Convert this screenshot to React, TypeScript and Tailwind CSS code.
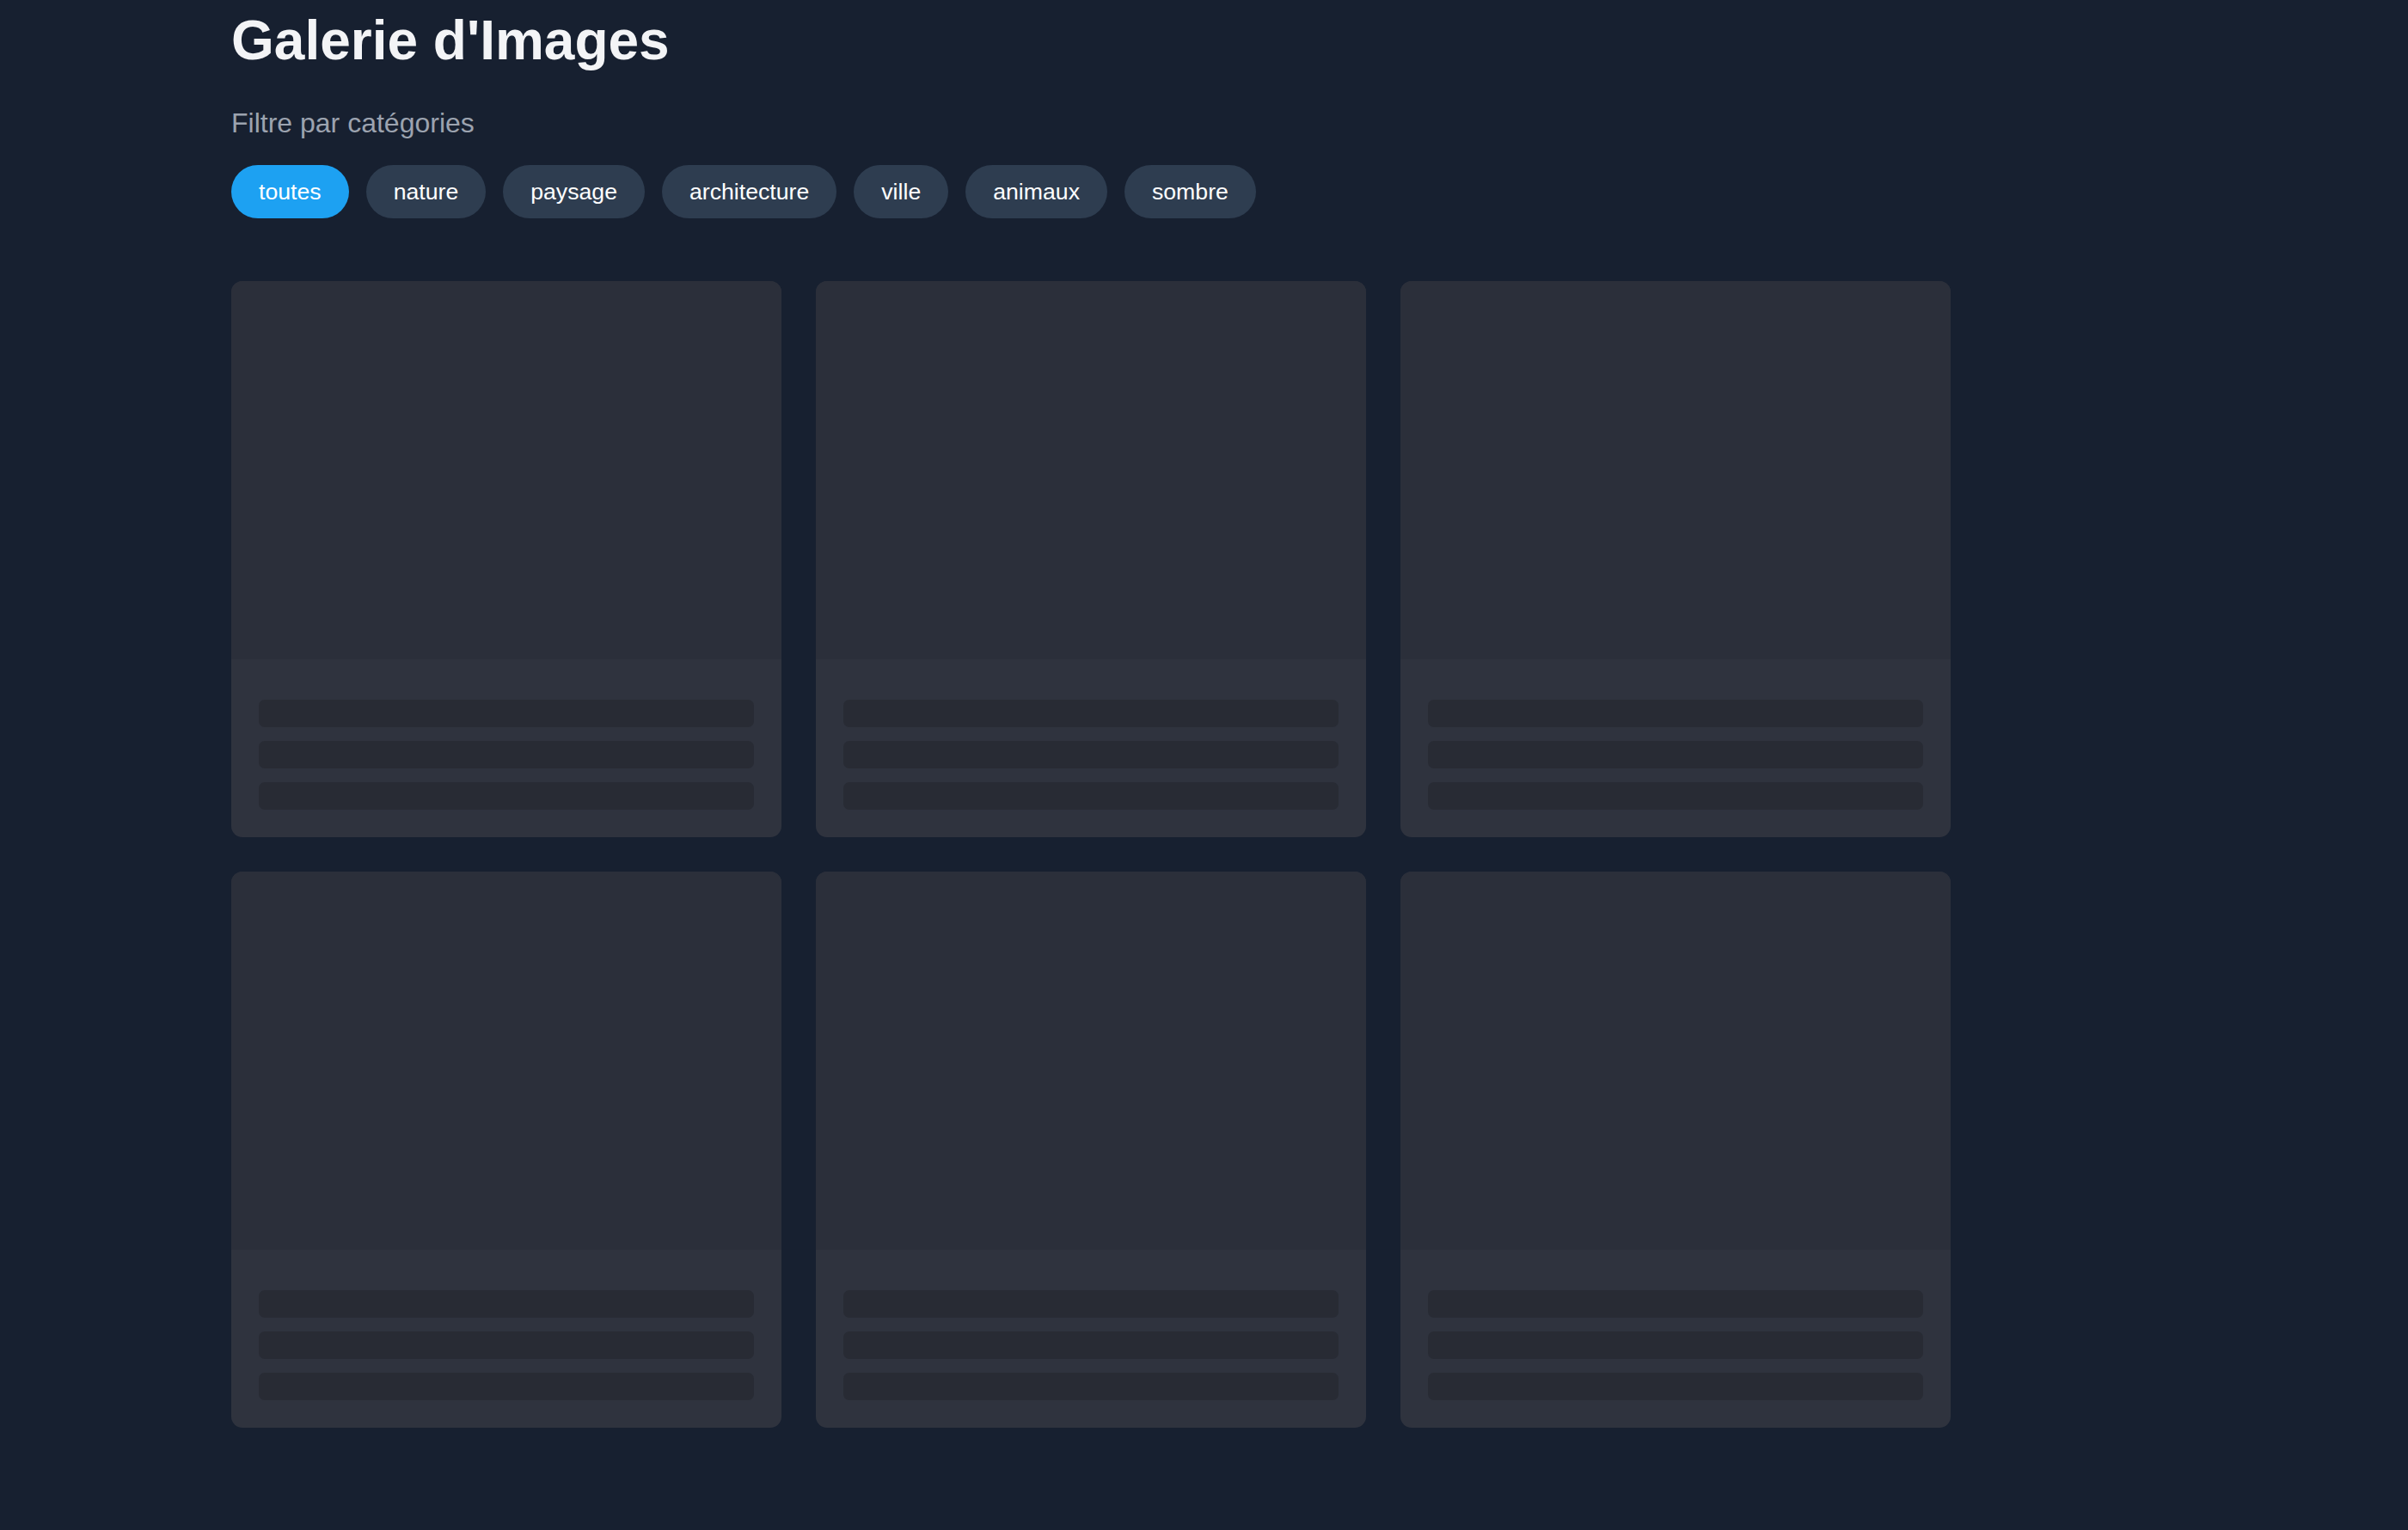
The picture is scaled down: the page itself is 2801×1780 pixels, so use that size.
const categories = ["toutes", "nature", "paysage", "architecture", "ville", "animaux", "sombre"];

function SkeletonCard() {
  return (
    <div className="flex flex-col overflow-hidden rounded-[13px] bg-[#2f333e]">
      <div className="h-[440px] bg-[#2b2f3a]"></div>
      <div className="flex flex-col gap-[16px] px-[32px] pt-[47px] pb-[32px]">
        <div className="h-[32px] rounded-[7px] bg-[#282b34]"></div>
        <div className="h-[32px] rounded-[7px] bg-[#282b34]"></div>
        <div className="h-[32px] rounded-[7px] bg-[#282b34]"></div>
      </div>
    </div>
  );
}

export default function App() {
  const active = "toutes";

  return (
    <div className="min-h-screen bg-[#172030] font-['Liberation_Sans',Arial,sans-serif]">
      <main className="mx-auto w-full max-w-[2263px] pt-[9px] pb-[114px]">
        <h1 className="text-[64px] leading-[77px] font-bold text-[#f3f4f6]">
          Galerie d'Images
        </h1>

        <p className="mt-[33px] text-[32px] leading-[48px] text-[#9ca3af]">
          Filtre par catégories
        </p>

        <div className="mt-[25px] flex flex-wrap gap-[20px]">
          {categories.map((cat) => (
            <button
              key={cat}
              className={`rounded-full px-[32px] py-[16px] text-[26.67px] leading-[30px] text-white ${
                cat === active ? "bg-[#1da1f2]" : "bg-[#2e3d50]"
              }`}
            >
              {cat}
            </button>
          ))}
        </div>

        <div className="mt-[73px] grid grid-cols-[repeat(3,640px)] gap-[40px]">
          {Array.from({ length: 6 }).map((_, i) => (
            <SkeletonCard key={i} />
          ))}
        </div>
      </main>
    </div>
  );
}
